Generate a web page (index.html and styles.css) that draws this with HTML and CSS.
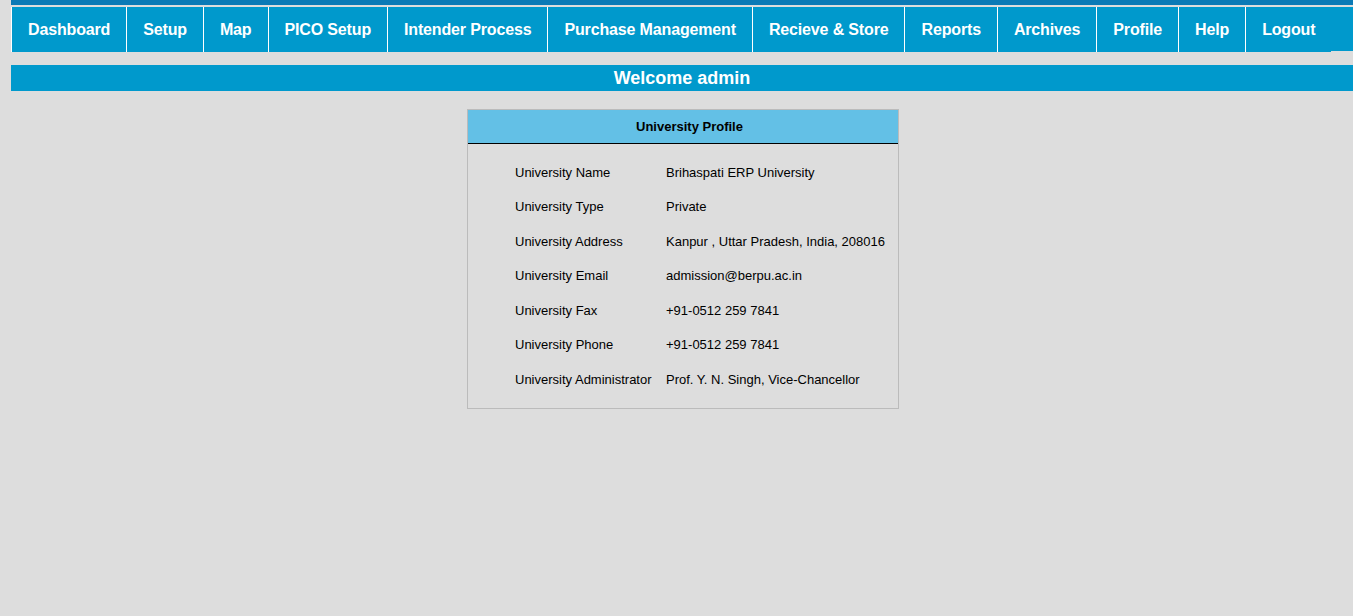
FILE: index.html
```html
<!DOCTYPE html>
<html>
<head>
<meta charset="utf-8">
<link rel="stylesheet" href="styles.css">
</head>
<body>
<div class="page">
  <div class="topbar"></div>
  <ul class="nav">
    <li>Dashboard</li>
    <li>Setup</li>
    <li>Map</li>
    <li>PICO Setup</li>
    <li>Intender Process</li>
    <li>Purchase Management</li>
    <li>Recieve &amp; Store</li>
    <li>Reports</li>
    <li>Archives</li>
    <li>Profile</li>
    <li>Help</li>
    <li>Logout</li>
  </ul>
  <div class="welcome">Welcome admin</div>
  <div class="card">
    <div class="card-head">University Profile</div>
    <div class="card-body">
      <div class="row"><span class="label">University Name</span><span class="value">Brihaspati ERP University</span></div>
      <div class="row"><span class="label">University Type</span><span class="value">Private</span></div>
      <div class="row"><span class="label">University Address</span><span class="value">Kanpur , Uttar Pradesh, India, 208016</span></div>
      <div class="row"><span class="label">University Email</span><span class="value">admission@berpu.ac.in</span></div>
      <div class="row"><span class="label">University Fax</span><span class="value">+91-0512 259 7841</span></div>
      <div class="row"><span class="label">University Phone</span><span class="value">+91-0512 259 7841</span></div>
      <div class="row"><span class="label">University Administrator</span><span class="value">Prof. Y. N. Singh, Vice-Chancellor</span></div>
    </div>
  </div>
</div>
</body>
</html>
```
FILE: styles.css
```css
html, body {
  margin: 0;
  padding: 0;
  background: #dddddd;
  font-family: "Liberation Sans", Arial, sans-serif;
}
.page {
  margin-left: 11px;
}
.topbar {
  height: 5px;
  background: #0a7ab6;
}
.nav {
  list-style: none;
  margin: 2px 0 0 0;
  padding: 0;
  display: flex;
  height: 44px;
  background: #0099cc;
}
.nav li {
  height: 45px;
  display: flex;
  align-items: center;
  padding: 0 16px;
  border-left: 1px solid #ffffff;
  background: #0099cc;
  color: #ffffff;
  font-weight: bold;
  font-size: 16px;
  letter-spacing: -0.15px;
  white-space: nowrap;
  box-sizing: border-box;
}
.welcome {
  margin-top: 14px;
  height: 26px;
  line-height: 26px;
  background: #0099cc;
  color: #ffffff;
  font-weight: bold;
  font-size: 18px;
  text-align: center;
}
.card {
  width: 430px;
  margin: 18px auto 0;
  border: 1px solid #bbbbbb;
  position: relative;
  left: 1px;
}
.card-head {
  height: 33px;
  line-height: 33px;
  padding-left: 13px;
  background: #63c0e6;
  border-bottom: 1px solid #000000;
  text-align: center;
  font-weight: bold;
  font-size: 13px;
  color: #000000;
}
.card-body {
  padding: 11px 0 11.5px 47px;
}
.row {
  display: flex;
  align-items: center;
  height: 34.5px;
  font-size: 13px;
  color: #000000;
}
.label {
  width: 151px;
  flex: none;
}
```
